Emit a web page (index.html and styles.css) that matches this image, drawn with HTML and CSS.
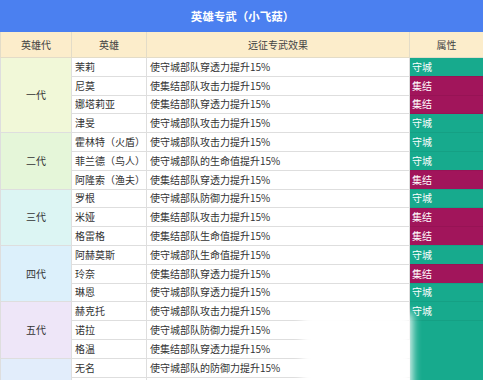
FILE: index.html
```html
<!DOCTYPE html>
<html lang="zh">
<head>
<meta charset="utf-8">
<link rel="stylesheet" href="styles.css">
</head>
<body>
<div class="page">
  <div class="title">英雄专武（小飞菇）</div>
  <table class="tbl">
    <colgroup>
      <col class="c1"><col class="c2"><col class="c3"><col class="c4">
    </colgroup>
    <thead>
      <tr class="head">
        <th>英雄代</th><th>英雄</th><th>远征专武效果</th><th>属性</th>
      </tr>
    </thead>
    <tbody>
      <tr><td class="gen g1" rowspan="4">一代</td><td>茉莉</td><td>使守城部队穿透力提升15%</td><td class="att def">守城</td></tr>
      <tr><td>尼莫</td><td>使集结部队攻击力提升15%</td><td class="att ral">集结</td></tr>
      <tr><td>娜塔莉亚</td><td>使集结部队穿透力提升15%</td><td class="att ral">集结</td></tr>
      <tr><td>津旻</td><td>使守城部队攻击力提升15%</td><td class="att def">守城</td></tr>

      <tr><td class="gen g2" rowspan="3">二代</td><td>霍林特（火盾）</td><td>使守城部队攻击力提升15%</td><td class="att def">守城</td></tr>
      <tr><td>菲兰德（鸟人）</td><td>使守城部队的生命值提升15%</td><td class="att def">守城</td></tr>
      <tr><td>阿隆索（渔夫）</td><td>使集结部队穿透力提升15%</td><td class="att ral">集结</td></tr>

      <tr><td class="gen g3" rowspan="3">三代</td><td>罗根</td><td>使守城部队防御力提升15%</td><td class="att def">守城</td></tr>
      <tr><td>米娅</td><td>使集结部队攻击力提升15%</td><td class="att ral">集结</td></tr>
      <tr><td>格雷格</td><td>使集结部队生命值提升15%</td><td class="att ral">集结</td></tr>

      <tr><td class="gen g4" rowspan="3">四代</td><td>阿赫莫斯</td><td>使守城部队生命值提升15%</td><td class="att def">守城</td></tr>
      <tr><td>玲奈</td><td>使集结部队穿透力提升15%</td><td class="att ral">集结</td></tr>
      <tr><td>琳恩</td><td>使守城部队穿透力提升15%</td><td class="att def">守城</td></tr>

      <tr><td class="gen g5" rowspan="3">五代</td><td>赫克托</td><td>使守城部队攻击力提升15%</td><td class="att def">守城</td></tr>
      <tr><td>诺拉</td><td>使守城部队防御力提升15%</td><td class="att def blank" rowspan="4"></td></tr>
      <tr><td>格温</td><td>使集结部队穿透力提升15%</td></tr>

      <tr><td class="gen g6" rowspan="2"></td><td>无名</td><td>使守城部队的防御力提升15%</td></tr>
      <tr><td></td><td></td></tr>
    </tbody>
  </table>
  <div class="mark"></div>
</div>
</body>
</html>
```

FILE: styles.css
```css
html, body {
  margin: 0;
  padding: 0;
  background: #ffffff;
}

body {
  width: 483px;
  height: 380px;
  overflow: hidden;
  font-family: "Noto Sans CJK SC", "Noto Sans", sans-serif;
}

.page {
  position: relative;
  width: 483px;
  height: 380px;
  overflow: hidden;
}

.title {
  height: 32px;
  background: #4b80f0;
  color: #ffffff;
  font-size: 11.5px;
  font-weight: bold;
  display: flex;
  align-items: center;
  justify-content: center;
  padding-left: 2px;
}

.tbl {
  width: 483px;
  table-layout: fixed;
  border-collapse: collapse;
  font-size: 10px;
  color: #333333;
}

.c1 { width: 71px; }
.c2 { width: 75px; }
.c3 { width: 263px; }
.c4 { width: 74px; }

.head th {
  height: 25px;
  background: #fcedcb;
  font-weight: normal;
  color: #444444;
  border: 1px solid #e3dcc8;
  border-top: none;
  padding: 0;
  text-align: center;
}

.tbl td {
  height: 17.8px;
  padding: 0 0 0 3px;
  border: 1px solid #dedede;
  white-space: nowrap;
  line-height: 14px;
}

.tbl td.gen {
  text-align: center;
  padding: 0;
  color: #333333;
}

.g1 { background: #f1f8d8; }
.g2 { background: #e5f6d9; }
.g3 { background: #dcf5f3; }
.g4 { background: #dcf0fb; }
.g5 { background: #eee6f8; }
.g6 { background: #e2edfb; }

.tbl td.att {
  color: #ffffff;
  padding-left: 2px;
  border-color: rgba(0, 0, 0, 0.06);
  border-right: none;
}

.def { background: #17aa8d; }
.ral { background: #a1155b; }

.tbl td.blank {
  vertical-align: top;
}

.mark {
  position: absolute;
  left: 302px;
  top: 313px;
  width: 110px;
  height: 90px;
  background: #ffffff;
  filter: blur(5px);
}
```
